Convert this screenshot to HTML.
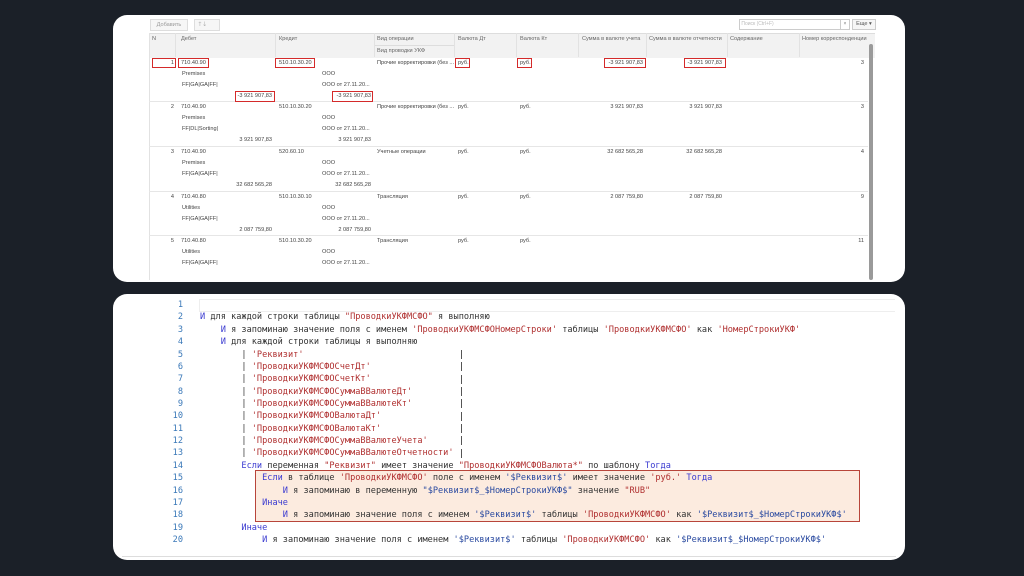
<!DOCTYPE html>
<html><head><meta charset="utf-8"><style>
body{margin:0;width:1024px;height:576px;background:#1b2028;position:relative;overflow:hidden;font-family:"Liberation Sans",sans-serif}
.p{position:absolute;background:#fff;border-radius:14px}
.t{position:absolute;font-size:5.6px;color:#444;white-space:nowrap;line-height:7px}
.r{text-align:right}
.h{color:#666}
.v{position:absolute;background:#e2e2e2;width:1px}
.hl{position:absolute;background:#e6e6e6;height:1px}
.box{position:absolute;border:1.5px solid #d42a2a;box-sizing:border-box}
.c{position:absolute;font-family:"DejaVu Sans Mono","Liberation Mono",monospace;font-size:8.6px;white-space:pre;color:#333;line-height:12px}
.n{position:absolute;font-family:"DejaVu Sans Mono",monospace;font-size:8.6px;color:#3a78b8;width:30px;text-align:right;left:153px;line-height:12px}
.pp{position:absolute;left:461px;width:1px;height:9px;background:#555}
.k{color:#3a3ad0}.s{color:#b03030}.d{color:#2a4aa0}
</style></head><body>
<div class="p" style="left:113px;top:15px;width:792px;height:267px"></div>
<div class="p" style="left:113px;top:294px;width:792px;height:266px"></div>

<!-- toolbar -->
<div style="position:absolute;left:150px;top:19px;width:36px;height:10px;border:1px solid #ddd;background:#f6f6f6;font-size:5.6px;color:#999;text-align:center;line-height:10px">Добавить</div>
<div style="position:absolute;left:194px;top:19px;width:24px;height:10px;border:1px solid #ddd;background:#f6f6f6;font-size:6px;color:#999;line-height:10px">&nbsp;&nbsp;🡑&nbsp;🡓</div>
<div style="position:absolute;left:739px;top:19px;width:100px;height:9px;border:1px solid #ccc;font-size:5px;color:#bbb;line-height:9px">&nbsp;Поиск (Ctrl+F)</div>
<div style="position:absolute;left:840px;top:19px;width:8px;height:9px;border:1px solid #ccc;font-size:5px;color:#777;line-height:9px;text-align:center">×</div>
<div style="position:absolute;left:852px;top:19px;width:22px;height:9px;border:1px solid #ccc;background:#f6f6f6;font-size:5.6px;color:#555;line-height:9px;text-align:center">Еще ▾</div>

<!-- header -->
<div style="position:absolute;left:149px;top:33px;width:726px;height:24px;background:#f2f2f2;border-top:1px solid #ddd"></div>
<div class="hl" style="left:374px;top:45px;width:80px;background:#ddd"></div>
<div class="v" style="left:175px;top:33px;height:24px"></div>
<div class="v" style="left:275px;top:33px;height:24px"></div>
<div class="v" style="left:374px;top:33px;height:24px"></div>
<div class="v" style="left:454px;top:33px;height:24px"></div>
<div class="v" style="left:516px;top:33px;height:24px"></div>
<div class="v" style="left:578px;top:33px;height:24px"></div>
<div class="v" style="left:646px;top:33px;height:24px"></div>
<div class="v" style="left:727px;top:33px;height:24px"></div>
<div class="v" style="left:799px;top:33px;height:24px"></div>
<div class="v" style="left:149px;top:33px;height:247px"></div>
<div class="t h" style="left:152px;top:36px">N</div>
<div class="t h" style="left:181px;top:36px">Дебет</div>
<div class="t h" style="left:279px;top:36px">Кредит</div>
<div class="t h" style="left:377px;top:36px">Вид операции</div>
<div class="t h" style="left:377px;top:48px">Вид проводки УКФ</div>
<div class="t h" style="left:458px;top:36px">Валюта Дт</div>
<div class="t h" style="left:520px;top:36px">Валюта Кт</div>
<div class="t h" style="left:582px;top:36px">Сумма в валюте учета</div>
<div class="t h" style="left:649px;top:36px">Сумма в валюте отчетности</div>
<div class="t h" style="left:730px;top:36px">Содержание</div>
<div class="t h" style="left:802px;top:36px">Номер корреспонденции</div>
<!-- scrollbar -->
<div style="position:absolute;left:869px;top:44px;width:4px;height:236px;background:#9a9a9a;border-radius:2px"></div>

<!-- rows -->
<div class="hl" style="left:149px;top:101px;width:719px"></div>
<div class="hl" style="left:149px;top:146px;width:719px"></div>
<div class="hl" style="left:149px;top:191px;width:719px"></div>
<div class="hl" style="left:149px;top:235px;width:719px"></div>

<!-- row 1 -->
<div class="t r" style="left:150px;top:60px;width:24px">1</div>
<div class="t" style="left:181px;top:60px">710.40.90</div>
<div class="t" style="left:279px;top:60px">510.10.30.20</div>
<div class="t" style="left:377px;top:60px">Прочие корректировки (без ...</div>
<div class="t" style="left:458px;top:60px">руб.</div>
<div class="t" style="left:520px;top:60px">руб.</div>
<div class="t r" style="left:580px;top:60px;width:63px">-3 921 907,83</div>
<div class="t r" style="left:650px;top:60px;width:72px">-3 921 907,83</div>
<div class="t r" style="left:800px;top:60px;width:64px">3</div>
<div class="t" style="left:182px;top:71px">Premises</div>
<div class="t" style="left:322px;top:71px">ООО</div>
<div class="t" style="left:182px;top:82px">FF|GA|GA|FF|</div>
<div class="t" style="left:322px;top:82px">ООО от 27.11.20...</div>
<div class="t r" style="left:220px;top:93px;width:52px">-3 921 907,83</div>
<div class="t r" style="left:320px;top:93px;width:51px">-3 921 907,83</div>
<div class="box" style="left:152px;top:58px;width:24px;height:10px"></div>
<div class="box" style="left:178px;top:58px;width:31px;height:10px"></div>
<div class="box" style="left:275px;top:58px;width:40px;height:10px"></div>
<div class="box" style="left:455px;top:58px;width:15px;height:10px"></div>
<div class="box" style="left:517px;top:58px;width:15px;height:10px"></div>
<div class="box" style="left:604px;top:58px;width:42px;height:10px"></div>
<div class="box" style="left:684px;top:58px;width:42px;height:10px"></div>
<div class="box" style="left:235px;top:91px;width:40px;height:11px"></div>
<div class="box" style="left:332px;top:91px;width:41px;height:11px"></div>

<!-- row 2 -->
<div class="t r" style="left:150px;top:104px;width:24px">2</div>
<div class="t" style="left:181px;top:104px">710.40.90</div>
<div class="t" style="left:279px;top:104px">510.10.30.20</div>
<div class="t" style="left:377px;top:104px">Прочие корректировки (без ...</div>
<div class="t" style="left:458px;top:104px">руб.</div>
<div class="t" style="left:520px;top:104px">руб.</div>
<div class="t r" style="left:580px;top:104px;width:63px">3 921 907,83</div>
<div class="t r" style="left:650px;top:104px;width:72px">3 921 907,83</div>
<div class="t r" style="left:800px;top:104px;width:64px">3</div>
<div class="t" style="left:182px;top:115px">Premises</div>
<div class="t" style="left:322px;top:115px">ООО</div>
<div class="t" style="left:182px;top:126px">FF|DL|Sorting|</div>
<div class="t" style="left:322px;top:126px">ООО от 27.11.20...</div>
<div class="t r" style="left:220px;top:137px;width:52px">3 921 907,83</div>
<div class="t r" style="left:320px;top:137px;width:51px">3 921 907,83</div>

<!-- row 3 -->
<div class="t r" style="left:150px;top:149px;width:24px">3</div>
<div class="t" style="left:181px;top:149px">710.40.90</div>
<div class="t" style="left:279px;top:149px">520.60.10</div>
<div class="t" style="left:377px;top:149px">Учетные операции</div>
<div class="t" style="left:458px;top:149px">руб.</div>
<div class="t" style="left:520px;top:149px">руб.</div>
<div class="t r" style="left:580px;top:149px;width:63px">32 682 565,28</div>
<div class="t r" style="left:650px;top:149px;width:72px">32 682 565,28</div>
<div class="t r" style="left:800px;top:149px;width:64px">4</div>
<div class="t" style="left:182px;top:160px">Premises</div>
<div class="t" style="left:322px;top:160px">ООО</div>
<div class="t" style="left:182px;top:171px">FF|GA|GA|FF|</div>
<div class="t" style="left:322px;top:171px">ООО от 27.11.20...</div>
<div class="t r" style="left:220px;top:182px;width:52px">32 682 565,28</div>
<div class="t r" style="left:320px;top:182px;width:51px">32 682 565,28</div>

<!-- row 4 -->
<div class="t r" style="left:150px;top:194px;width:24px">4</div>
<div class="t" style="left:181px;top:194px">710.40.80</div>
<div class="t" style="left:279px;top:194px">510.10.30.10</div>
<div class="t" style="left:377px;top:194px">Трансляция</div>
<div class="t" style="left:458px;top:194px">руб.</div>
<div class="t" style="left:520px;top:194px">руб.</div>
<div class="t r" style="left:580px;top:194px;width:63px">2 087 759,80</div>
<div class="t r" style="left:650px;top:194px;width:72px">2 087 759,80</div>
<div class="t r" style="left:800px;top:194px;width:64px">9</div>
<div class="t" style="left:182px;top:205px">Utilities</div>
<div class="t" style="left:322px;top:205px">ООО</div>
<div class="t" style="left:182px;top:216px">FF|GA|GA|FF|</div>
<div class="t" style="left:322px;top:216px">ООО от 27.11.20...</div>
<div class="t r" style="left:220px;top:227px;width:52px">2 087 759,80</div>
<div class="t r" style="left:320px;top:227px;width:51px">2 087 759,80</div>

<!-- row 5 -->
<div class="t r" style="left:150px;top:238px;width:24px">5</div>
<div class="t" style="left:181px;top:238px">710.40.80</div>
<div class="t" style="left:279px;top:238px">510.10.30.20</div>
<div class="t" style="left:377px;top:238px">Трансляция</div>
<div class="t" style="left:458px;top:238px">руб.</div>
<div class="t" style="left:520px;top:238px">руб.</div>
<div class="t r" style="left:800px;top:238px;width:64px">11</div>
<div class="t" style="left:182px;top:249px">Utilities</div>
<div class="t" style="left:322px;top:249px">ООО</div>
<div class="t" style="left:182px;top:260px">FF|GA|GA|FF|</div>
<div class="t" style="left:322px;top:260px">ООО от 27.11.20...</div>

<!-- code panel -->
<div style="position:absolute;left:199px;top:299px;width:695px;height:11px;border:1px solid #eee;border-right:none"></div>
<div style="position:absolute;left:255px;top:470px;width:605px;height:52px;background:#fcebdf;border:1.5px solid #b8453a;box-sizing:border-box"></div>
<div style="position:absolute;left:122px;top:556px;width:774px;height:1px;background:#ddd"></div>

<div class="n" style="top:299px">1</div>
<div class="n" style="top:311.4px">2</div>
<div class="n" style="top:323.7px">3</div>
<div class="n" style="top:336.1px">4</div>
<div class="n" style="top:348.5px">5</div>
<div class="n" style="top:360.8px">6</div>
<div class="n" style="top:373.2px">7</div>
<div class="n" style="top:385.6px">8</div>
<div class="n" style="top:397.9px">9</div>
<div class="n" style="top:410.3px">10</div>
<div class="n" style="top:422.7px">11</div>
<div class="n" style="top:435px">12</div>
<div class="n" style="top:447.4px">13</div>
<div class="n" style="top:459.8px">14</div>
<div class="n" style="top:472.1px">15</div>
<div class="n" style="top:484.5px">16</div>
<div class="n" style="top:496.9px">17</div>
<div class="n" style="top:509.2px">18</div>
<div class="n" style="top:521.6px">19</div>
<div class="n" style="top:534px">20</div>

<div class="pp" style="top:350px"></div>
<div class="pp" style="top:362px"></div>
<div class="pp" style="top:375px"></div>
<div class="pp" style="top:387px"></div>
<div class="pp" style="top:399px"></div>
<div class="pp" style="top:412px"></div>
<div class="pp" style="top:424px"></div>
<div class="pp" style="top:436px"></div>
<div class="pp" style="top:449px"></div>

<div class="c" style="left:200px;top:311.4px"><span class="k">И</span> для каждой строки таблицы <span class="s">"ПроводкиУКФМСФО"</span> я выполняю</div>
<div class="c" style="left:200px;top:323.7px">    <span class="k">И</span> я запоминаю значение поля с именем <span class="s">'ПроводкиУКФМСФОНомерСтроки'</span> таблицы <span class="s">'ПроводкиУКФМСФО'</span> как <span class="s">'НомерСтрокиУКФ'</span></div>
<div class="c" style="left:200px;top:336.1px">    <span class="k">И</span> для каждой строки таблицы я выполняю</div>
<div class="c" style="left:200px;top:348.5px">        | <span class="s">'Реквизит'</span></div>
<div class="c" style="left:200px;top:360.8px">        | <span class="s">'ПроводкиУКФМСФОСчетДт'</span></div>
<div class="c" style="left:200px;top:373.2px">        | <span class="s">'ПроводкиУКФМСФОСчетКт'</span></div>
<div class="c" style="left:200px;top:385.6px">        | <span class="s">'ПроводкиУКФМСФОСуммаВВалютеДт'</span></div>
<div class="c" style="left:200px;top:397.9px">        | <span class="s">'ПроводкиУКФМСФОСуммаВВалютеКт'</span></div>
<div class="c" style="left:200px;top:410.3px">        | <span class="s">'ПроводкиУКФМСФОВалютаДт'</span></div>
<div class="c" style="left:200px;top:422.7px">        | <span class="s">'ПроводкиУКФМСФОВалютаКт'</span></div>
<div class="c" style="left:200px;top:435px">        | <span class="s">'ПроводкиУКФМСФОСуммаВВалютеУчета'</span></div>
<div class="c" style="left:200px;top:447.4px">        | <span class="s">'ПроводкиУКФМСФОСуммаВВалютеОтчетности'</span></div>
<div class="c" style="left:200px;top:459.8px">        <span class="k">Если</span> переменная <span class="s">"Реквизит"</span> имеет значение <span class="s">"ПроводкиУКФМСФОВалюта*"</span> по шаблону <span class="k">Тогда</span></div>
<div class="c" style="left:200px;top:472.1px">            <span class="k">Если</span> в таблице <span class="s">'ПроводкиУКФМСФО'</span> поле с именем <span class="d">'$Реквизит$'</span> имеет значение <span class="s">'руб.'</span> <span class="k">Тогда</span></div>
<div class="c" style="left:200px;top:484.5px">                <span class="k">И</span> я запоминаю в переменную <span class="d">"$Реквизит$_$НомерСтрокиУКФ$"</span> значение <span class="s">"RUB"</span></div>
<div class="c" style="left:200px;top:496.9px">            <span class="k">Иначе</span></div>
<div class="c" style="left:200px;top:509.2px">                <span class="k">И</span> я запоминаю значение поля с именем <span class="d">'$Реквизит$'</span> таблицы <span class="s">'ПроводкиУКФМСФО'</span> как <span class="d">'$Реквизит$_$НомерСтрокиУКФ$'</span></div>
<div class="c" style="left:200px;top:521.6px">        <span class="k">Иначе</span></div>
<div class="c" style="left:200px;top:534px">            <span class="k">И</span> я запоминаю значение поля с именем <span class="d">'$Реквизит$'</span> таблицы <span class="s">'ПроводкиУКФМСФО'</span> как <span class="d">'$Реквизит$_$НомерСтрокиУКФ$'</span></div>
</body></html>
